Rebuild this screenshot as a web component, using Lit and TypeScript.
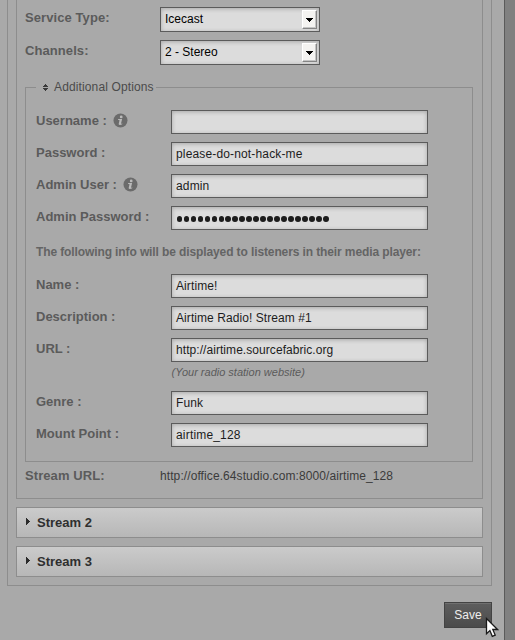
import { LitElement, html, css, nothing } from "lit";
import { customElement } from "lit/decorators.js";
import { styleMap } from "lit/directives/style-map.js";

interface Field {
  label: string;
  value: string;
  tracking?: number;
  info?: boolean;
  hint?: string;
  secret?: boolean;
}

const ACCESS: Field[] = [
  { label: "Username :", value: "", info: true },
  { label: "Password :", value: "please-do-not-hack-me", tracking: 0.15 },
  { label: "Admin User :", value: "admin", tracking: 0.15, info: true },
  { label: "Admin Password :", value: "", secret: true },
];

const LISTENER: Field[] = [
  { label: "Name :", value: "Airtime!", tracking: 0.1 },
  { label: "Description :", value: "Airtime Radio! Stream #1", tracking: 0.07 },
  { label: "URL :", value: "http://airtime.sourcefabric.org", tracking: 0.06, hint: "(Your radio station website)" },
  { label: "Genre :", value: "Funk", tracking: 0.1 },
  { label: "Mount Point :", value: "airtime_128", tracking: 0.18 },
];

@customElement("app-root")
export class AppRoot extends LitElement {
  static styles = css`
    :host {
      display: flex;
      width: 515px;
      height: 640px;
      overflow: hidden;
      position: relative;
      background: #808080;
      font: 12px/16px "Liberation Sans", Arial, sans-serif;
      color: #1c1c1c;
    }
    * { box-sizing: border-box; }
    .page {
      width: 505px;
      height: 640px;
      padding: 0 12px 0 7px;
      border-right: 1px solid #5a5a5a;
      background: #a9a9a9;
      display: flex;
      flex-direction: column;
      flex: none;
    }
    .outer {
      width: 485px;
      height: 586px;
      border: 1px solid #8d8d8d;
      border-top: 0;
      padding: 0 8px;
      flex: none;
    }
    .inner {
      width: 467px;
      height: 499px;
      border: 1px solid #8d8d8d;
      border-top: 0;
      padding: 7px 9px 0 8px;
    }
    .pick { display: flex; height: 33px; }
    .label {
      font-size: 13px;
      line-height: 22px;
      font-weight: bold;
      color: #5b5b5b;
      flex: none;
      white-space: nowrap;
      display: flex;
      width: 135px;
    }
    .pick .label, .address .label { letter-spacing: 0.08px; }
    .select {
      width: 160px;
      height: 25px;
      border: 1px solid #5b5b5b;
      background: #dcdcdc;
      box-shadow: inset 0 1px 4px rgba(0, 0, 0, 0.24);
      padding: 2px 2px 2px 4px;
      display: flex;
      justify-content: space-between;
      color: #000;
      line-height: 18px;
    }
    .drop {
      width: 15px;
      height: 19px;
      background: #f4f3f1;
      border: 1px solid #fff;
      border-right-color: #858585;
      border-bottom-color: #858585;
      box-shadow: inset -1px -1px #c4c4c4;
      display: flex;
      align-items: center;
      justify-content: center;
    }
    svg { display: block; flex: none; }
    .options {
      position: relative;
      width: 448px;
      height: 375px;
      margin-top: 14px;
      border: 1px solid #8d8d8d;
      padding: 22px 10px 0;
    }
    .legend {
      position: absolute;
      left: 10px;
      top: -9px;
      height: 16px;
      width: 120px;
      background: #a9a9a9;
      display: flex;
      align-items: center;
      padding-left: 7px;
      gap: 6px;
      color: #4b4b4b;
      white-space: nowrap;
      letter-spacing: 0.13px;
    }
    .field { display: flex; height: 32px; }
    .field.tall { height: 53px; }
    .info { margin: 3px 0 0 6px; }
    .input {
      width: 257px;
      height: 24px;
      border: 1px solid #5b5b5b;
      background: #dcdcdc;
      box-shadow: inset 0 1px 4px rgba(0, 0, 0, 0.24);
      padding: 0 4px;
      line-height: 22px;
      white-space: nowrap;
    }
    .dots { display: flex; align-items: center; height: 22px; gap: 1.2px; padding: 2px 0 0 0.6px; }
    .dot { width: 5.8px; height: 5.8px; border-radius: 50%; background: #1c1c1c; flex: none; }
    .hint {
      font-size: 11px;
      font-style: italic;
      color: #5b5b5b;
      line-height: 14px;
      margin: 3px 0 0 0.5px;
    }
    .note {
      height: 36px;
      padding-top: 6px;
      font-weight: bold;
      color: #646464;
      white-space: nowrap;
      letter-spacing: -0.11px;
    }
    .address { display: flex; padding-top: 3px; color: #3b3b3b; line-height: 22px; }
    .address .url { letter-spacing: 0.09px; }
    .bar {
      width: 467px;
      height: 31px;
      margin-top: 8px;
      border: 1px solid #8d8d8d;
      background: linear-gradient(#cbcbcb, #b7b7b7);
      display: flex;
      align-items: center;
      padding-left: 9px;
      gap: 7px;
      font-size: 13px;
      font-weight: bold;
      color: #2f2f2f;
    }
    .bar svg { margin-bottom: 2px; }
    .save {
      align-self: flex-end;
      width: 48px;
      height: 26px;
      margin-top: 16px;
      border: 1px solid #434343;
      background: linear-gradient(#5e5e5e, #4b4b4b);
      box-shadow: inset 0 1px #707070;
      color: #eee;
      line-height: 25px;
      text-align: center;
    }
    .cursor { position: absolute; left: 485px; top: 617px; }
  `;

  private infoIcon() {
    return html`<svg class="info" width="15" height="15" viewBox="0 0 15 15">
      <circle cx="7.5" cy="7.5" r="7" fill="#6b6b6b"></circle>
      <circle cx="8.2" cy="3.9" r="1.4" fill="#bababa"></circle>
      <path d="M5.1 6h4l-1 4.2q-.1.6.4.5l.9-.3-.2.8q-1.2.9-2.6.8-1.2-.2-.9-1.3l.8-3.1q.1-.6-.5-.6h-.9z" fill="#bababa"></path>
    </svg>`;
  }

  private field(f: Field) {
    return html`<div class="field ${f.hint ? "tall" : ""}">
      <div class="label"><span>${f.label}</span>${f.info ? this.infoIcon() : nothing}</div>
      <div>
        <div class="input" style=${styleMap({ letterSpacing: `${f.tracking ?? 0}px` })}>${f.secret
          ? html`<div class="dots">${Array.from({ length: 22 }, () => html`<span class="dot"></span>`)}</div>`
          : f.value}</div>
        ${f.hint ? html`<div class="hint">${f.hint}</div>` : nothing}
      </div>
    </div>`;
  }

  private pick(label: string, value: string) {
    return html`<div class="pick">
      <div class="label">${label}</div>
      <div class="select"><span>${value}</span>
        <span class="drop"><svg width="7" height="4" viewBox="0 0 7 4" shape-rendering="crispEdges"><path d="M0 0h7v1H6v1H5v1H4v1H3V3H2V2H1V1H0z"></path></svg></span>
      </div>
    </div>`;
  }

  private bar(name: string) {
    return html`<div class="bar">
      <svg width="4" height="7" viewBox="0 0 4 7" shape-rendering="crispEdges"><path d="M0 0h1v1h1v1h1v1h1v1H3v1H2v1H1v1H0z" fill="#2b2b2b"></path></svg>
      <span>${name}</span>
    </div>`;
  }

  render() {
    return html`
      <div class="page">
        <div class="outer">
          <div class="inner">
            ${this.pick("Service Type:", "Icecast")}
            ${this.pick("Channels:", "2 - Stereo")}
            <div class="options">
              <div class="legend">
                <svg width="5" height="7" viewBox="0 0 5 7" shape-rendering="crispEdges"><path d="M2 0h1v1h1v1h1v1H0V2h1V1h1zM0 4h5v1H4v1H3v1H2V6H1V5H0z" fill="#3a3a3a"></path></svg>
                <span>Additional Options</span>
              </div>
              ${ACCESS.map((f) => this.field(f))}
              <div class="note">The following info will be displayed to listeners in their media player:</div>
              ${LISTENER.map((f) => this.field(f))}
            </div>
            <div class="address"><div class="label">Stream URL:</div><span class="url">http://office.64studio.com:8000/airtime_128</span></div>
          </div>
          ${this.bar("Stream 2")}
          ${this.bar("Stream 3")}
        </div>
        <div class="save">Save</div>
      </div>
      <svg class="cursor" width="14" height="21" viewBox="0 0 14 21"><path d="M1.5 1.5v15.2l3.4-3.2 2.4 5.8 2.9-1.2-2.4-5.6h4.7z" fill="#fff" stroke="#1a1a1a" stroke-width="1.3"></path></svg>
    `;
  }
}
